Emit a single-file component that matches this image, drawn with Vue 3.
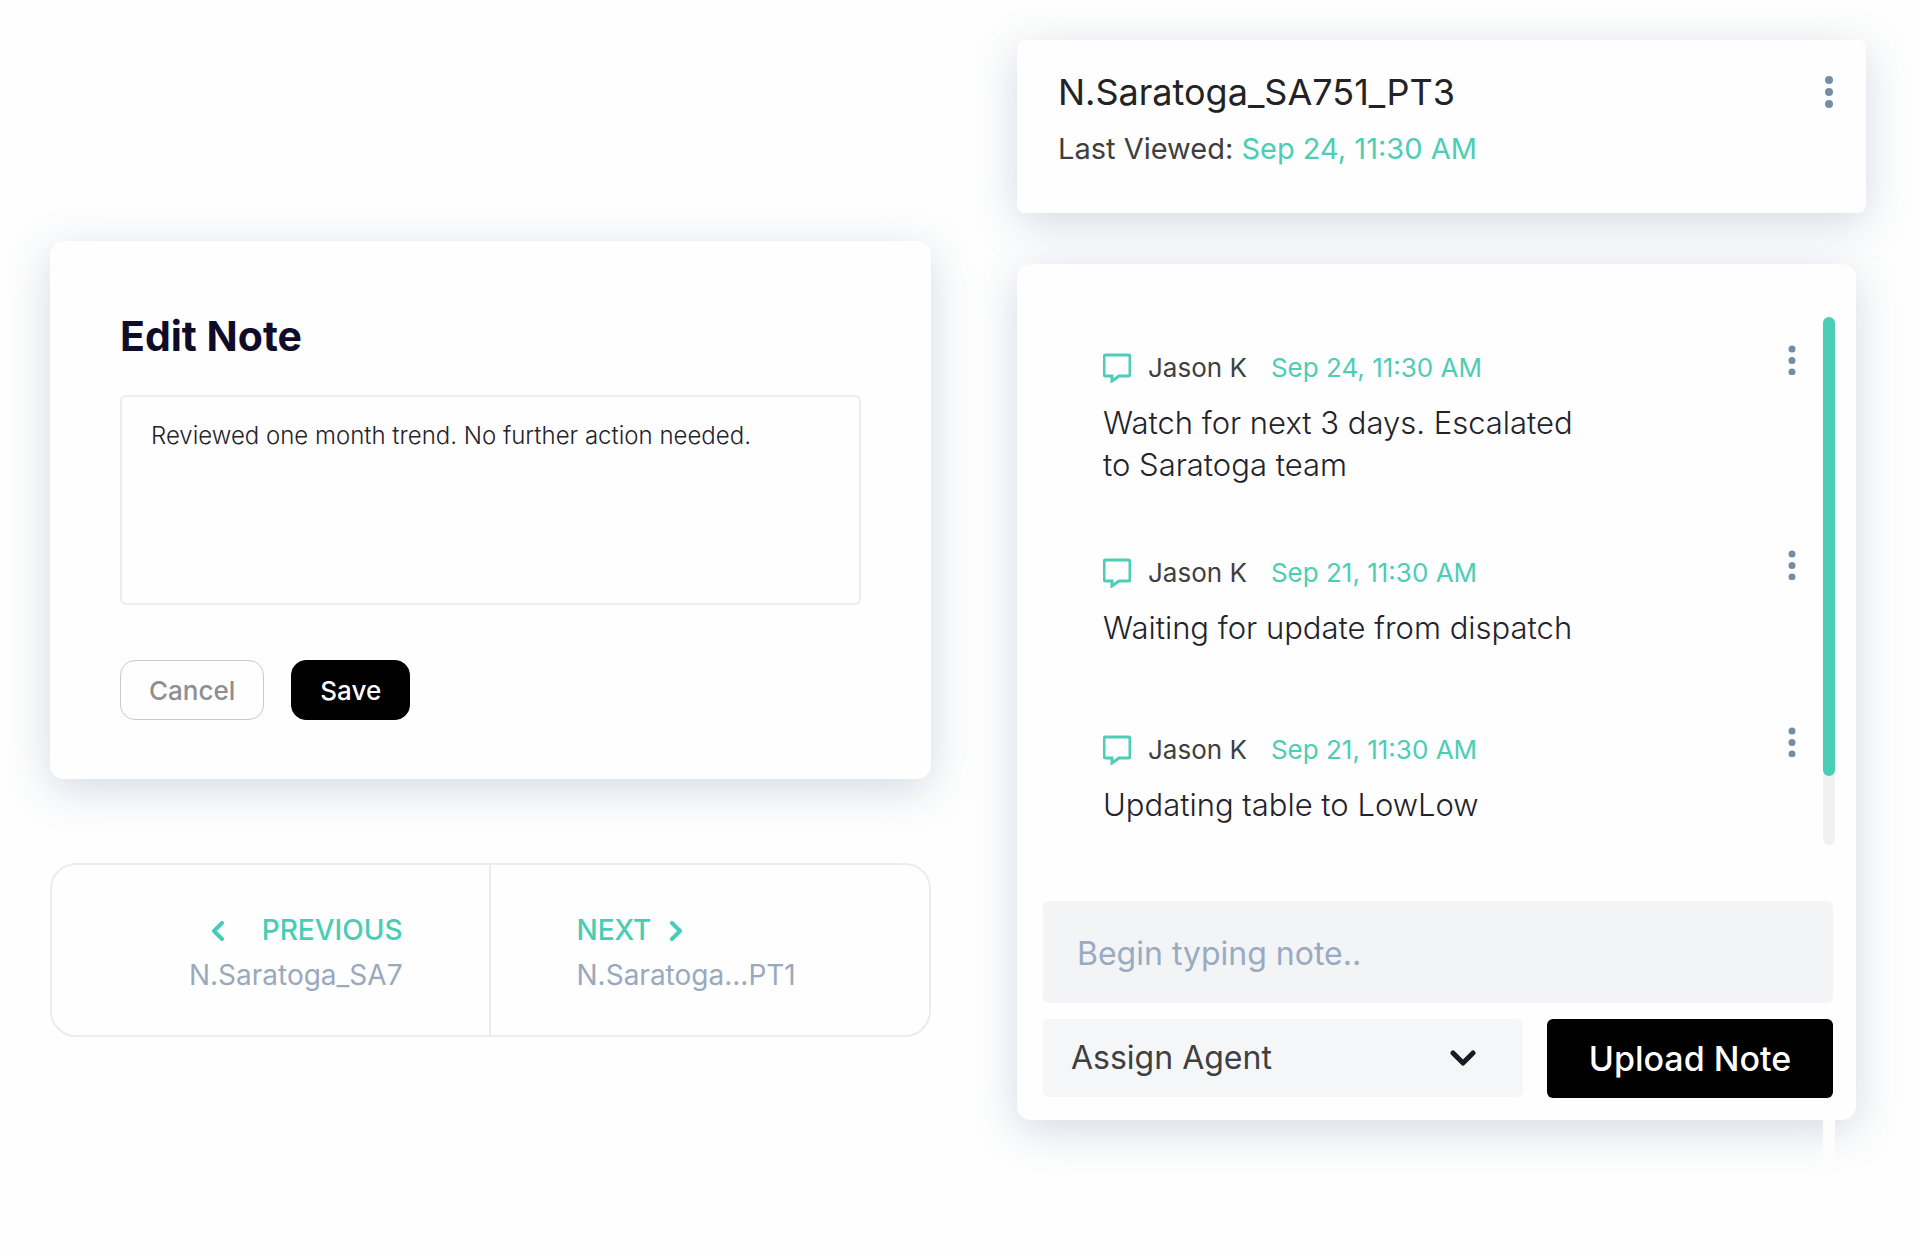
<script setup>
import { ref } from 'vue'

const draft = ref('Reviewed one month trend. No further action needed.')
const newNote = ref('')
const agent = ref('')
const notes = [
  { id: 1, author: 'Jason K', date: 'Sep 24, 11:30 AM', text: 'Watch for next 3 days. Escalated to Saratoga team' },
  { id: 2, author: 'Jason K', date: 'Sep 21, 11:30 AM', text: 'Waiting for update from dispatch' },
  { id: 3, author: 'Jason K', date: 'Sep 21, 11:30 AM', text: 'Updating table to LowLow' }
]
</script>

<template>
  <main class="board">
    <div class="column column-left">
      <form class="card edit" @submit.prevent>
        <h2 class="edit-title"><label for="edit-note">Edit Note</label></h2>
        <textarea id="edit-note" v-model="draft" class="edit-text"></textarea>
        <div class="edit-actions">
          <button type="button" class="btn btn-outline">Cancel</button>
          <button type="submit" class="btn btn-solid">Save</button>
        </div>
      </form>

      <nav class="pager" aria-label="Points">
        <a href="#previous" class="pager-link pager-prev">
          <span class="pager-label pager-label-prev">
            <svg width="14" height="20" viewBox="0 0 14 20" aria-hidden="true"><path d="M11 2 3 10l8 8" /></svg>
            PREVIOUS
          </span>
          <span class="pager-name">N.Saratoga_SA7</span>
        </a>
        <a href="#next" class="pager-link pager-next">
          <span class="pager-label">
            NEXT
            <svg width="14" height="20" viewBox="0 0 14 20" aria-hidden="true"><path d="m3 2 8 8-8 8" /></svg>
          </span>
          <span class="pager-name">N.Saratoga...PT1</span>
        </a>
      </nav>
    </div>

    <div class="column column-right">
      <header class="card point">
        <div>
          <h1 class="point-title">N.Saratoga_SA751_PT3</h1>
          <p class="point-viewed">Last Viewed: <time>Sep 24, 11:30 AM</time></p>
        </div>
        <button type="button" class="kebab kebab-large" aria-label="Point options">
          <svg width="8" height="34" viewBox="0 0 8 34" aria-hidden="true">
            <circle cx="4" cy="5" r="4" /><circle cx="4" cy="17" r="4" /><circle cx="4" cy="29" r="4" />
          </svg>
        </button>
      </header>

      <section class="card notes" aria-label="Notes">
        <div class="notes-scroll">
          <ul class="notes-list">
            <li v-for="note in notes" :key="note.id" class="note">
              <div class="note-main">
                <div class="note-meta">
                  <svg class="note-icon" width="28" height="30" viewBox="0 0 28 30" aria-hidden="true">
                    <path d="M3 2h22q2 0 2 2v17q0 2-2 2H16l-7 5v-5H3q-2 0-2-2V4q0-2 2-2Z" />
                  </svg>
                  <span class="note-author">{{ note.author }}</span>
                  <time class="note-date">{{ note.date }}</time>
                </div>
                <p class="note-text">{{ note.text }}</p>
              </div>
              <button type="button" class="kebab" aria-label="Note options">
                <svg width="8" height="30" viewBox="0 0 8 30" aria-hidden="true">
                  <circle cx="4" cy="4" r="3.5" /><circle cx="4" cy="15.5" r="3.5" /><circle cx="4" cy="27" r="3.5" />
                </svg>
              </button>
            </li>
          </ul>
          <div class="track"><div class="thumb"></div></div>
        </div>

        <form class="composer" @submit.prevent>
          <input v-model="newNote" class="composer-input" type="text" aria-label="New note" placeholder="Begin typing note.." />
          <div class="composer-row">
            <div class="agent">
              <select v-model="agent" class="agent-select" aria-label="Assign Agent">
                <option value="">Assign Agent</option>
                <option value="jason">Jason K</option>
              </select>
              <svg class="agent-arrow" width="26" height="16" viewBox="0 0 26 16" aria-hidden="true"><path d="m3 3 10 10L23 3" /></svg>
            </div>
            <button type="submit" class="upload">Upload Note</button>
          </div>
        </form>
      </section>
    </div>
  </main>
</template>

<style>
body {
  margin: 0;
  background: #fefefe;
}
</style>

<style scoped>
* {
  box-sizing: border-box;
}

.board {
  display: grid;
  grid-template-columns: 881fr 849fr;
  column-gap: 86px;
  align-items: start;
  padding: 40px 54px 80px 50px;
  font-family: Inter, "Liberation Sans", sans-serif;
  color: #3f3f41;
}

.column {
  display: flex;
  flex-direction: column;
  min-width: 0;
}

.column-left {
  gap: 84px;
  padding-top: 201px;
}

.column-right {
  gap: 51px;
}

.card {
  position: relative;
  background: #fefefe;
  border-radius: 14px;
  box-shadow: 0 10px 44px rgba(85, 115, 150, 0.25);
}

button,
input,
select,
textarea {
  font-family: inherit;
}

/* Edit note */
.edit {
  display: flex;
  flex-direction: column;
  padding: 71px 70px 59px;
}

.edit-title {
  margin: 0 0 35px;
  font-size: 41px;
  line-height: 48px;
  font-weight: 700;
  color: #0f0c29;
}

.edit-text {
  height: 210px;
  padding: 24px 29px;
  border: 2px solid #e9edf0;
  border-radius: 6px;
  outline: none;
  resize: none;
  background: transparent;
  font-size: 24px;
  line-height: 30px;
  font-weight: 300;
  color: #23232c;
}

.edit-actions {
  display: flex;
  gap: 27px;
  margin-top: 55px;
}

.btn {
  height: 60px;
  padding: 0 28px;
  border: 1px solid #c9c9cb;
  border-radius: 15px;
  font-size: 26px;
  font-weight: 500;
}

.btn-outline {
  background: #fefefe;
  color: #8f8f91;
}

.btn-solid {
  border-color: #000;
  background: #000;
  color: #fff;
}

/* Previous / next */
.pager {
  display: grid;
  grid-template-columns: 1fr 1fr;
  border: 2px solid #e9edef;
  border-radius: 26px;
}

.pager-link {
  display: flex;
  flex-direction: column;
  padding: 43px 86px 37px;
  font-size: 28px;
  line-height: 45px;
  text-decoration: none;
}

.pager-prev {
  align-items: flex-end;
  border-right: 2px solid #e9edef;
}

.pager-next {
  align-items: flex-start;
}

.pager-label {
  display: flex;
  align-items: center;
  gap: 18px;
  font-weight: 500;
  color: #48cdb4;
}

.pager-label-prev {
  gap: 37px;
}

.pager-label path {
  fill: none;
  stroke: #48cdb4;
  stroke-width: 4;
  stroke-linecap: round;
  stroke-linejoin: round;
}

.pager-name {
  color: #9aa9bd;
}

/* Point header */
.point {
  z-index: 1;
  display: flex;
  justify-content: space-between;
  align-items: flex-start;
  padding: 31px 25px 46px 41px;
  border-radius: 8px;
}

.point-title {
  margin: 0 0 18px;
  font-size: 36px;
  line-height: 42px;
  font-weight: 400;
  color: #232325;
}

.point-viewed {
  margin: 0;
  font-size: 29px;
  line-height: 36px;
}

.point-viewed time,
.note-date {
  color: #4dcdb5;
}

.kebab {
  display: flex;
  flex: none;
  justify-content: center;
  align-items: center;
  width: 24px;
  height: 30px;
  padding: 0;
  border: 0;
  background: none;
}

.kebab-large {
  height: 42px;
}

.kebab circle {
  fill: #758da3;
}

/* Notes panel */
.notes {
  margin-right: 10px;
  padding: 53px 21px 22px 26px;
}

.notes::after {
  content: "";
  position: absolute;
  top: 100%;
  right: 21px;
  width: 12px;
  height: 52px;
  background: #fdfdfe;
}

.notes-scroll {
  display: flex;
  gap: 19px;
}

.notes-list {
  display: flex;
  flex: 1;
  flex-direction: column;
  gap: 64px;
  margin: 0;
  padding: 28px 0 0 60px;
  list-style: none;
}

.note {
  display: flex;
  justify-content: space-between;
  align-items: flex-start;
  min-height: 113px;
}

.note-main {
  padding-top: 5px;
}

.note-meta {
  display: flex;
  align-items: center;
  margin-bottom: 16px;
  font-size: 26px;
  line-height: 36px;
}

.note-icon {
  margin-right: 17px;
}

.note-icon path {
  fill: none;
  stroke: #4dcdb5;
  stroke-width: 3;
}

.note-author {
  margin-right: 24px;
}

.note-text {
  max-width: 490px;
  margin: 0;
  font-size: 31px;
  line-height: 42px;
  font-weight: 300;
  color: #23232c;
}

.track {
  flex: none;
  width: 12px;
  height: 528px;
  border-radius: 6px;
  background: #f1f1f2;
}

.thumb {
  height: 87%;
  border-radius: 6px;
  background: #48cfb6;
}

/* Composer */
.composer {
  display: flex;
  flex-direction: column;
  gap: 16px;
  margin-top: 56px;
  padding-right: 2px;
}

.composer-input {
  width: 100%;
  height: 102px;
  padding: 3px 34px 0;
  border: 0;
  border-radius: 6px;
  outline: none;
  background: #f2f4f6;
  font-size: 32px;
  color: #3f3f41;
}

.composer-input::placeholder {
  color: #9aabc1;
  opacity: 1;
}

.composer-row {
  display: grid;
  grid-template-columns: 480fr 286fr;
  column-gap: 24px;
}

.agent {
  position: relative;
}

.agent-select {
  width: 100%;
  height: 78px;
  padding: 0 80px 2px 28px;
  border: 0;
  border-radius: 6px;
  appearance: none;
  background: #f5f6f8;
  font-size: 32px;
  color: #3f3f41;
}

.agent-arrow {
  position: absolute;
  top: 31px;
  right: 47px;
  pointer-events: none;
}

.agent-arrow path {
  fill: none;
  stroke: #191a22;
  stroke-width: 5;
  stroke-linecap: round;
  stroke-linejoin: round;
}

.upload {
  height: 79px;
  padding: 0;
  border: 0;
  border-radius: 6px;
  background: #000;
  font-size: 34px;
  font-weight: 500;
  color: #fff;
}
</style>
